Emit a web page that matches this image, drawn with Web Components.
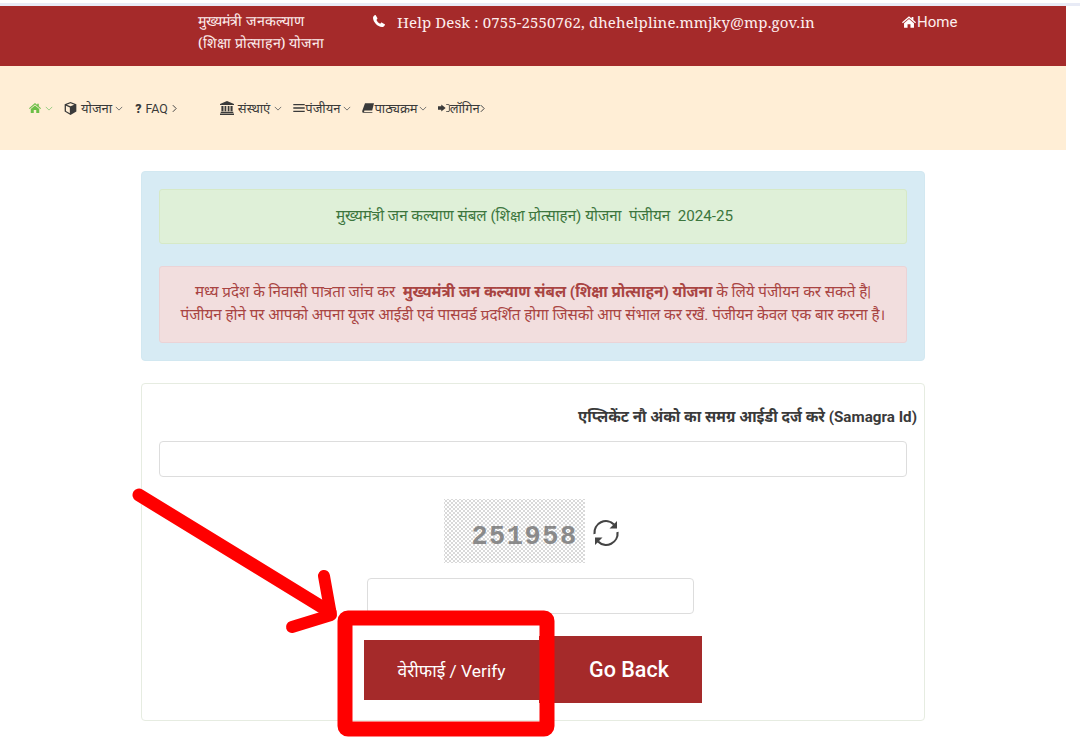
<!DOCTYPE html>
<html lang="hi">
<head>
<meta charset="utf-8">
<title>Registration</title>
<style>
  html, body { margin: 0; padding: 0; background: #fff; }
  body { font-family: Roboto, "Noto Sans", sans-serif; overflow: hidden; height: 743px; position: relative; }
</style>
</head>
<body>
<top-strip></top-strip>
<site-header></site-header>
<site-nav></site-nav>
<main-content>
  <info-panel>
    <status-alert kind="success">मुख्यमंत्री जन कल्याण संबल (शिक्षा प्रोत्साहन) योजना&nbsp; पंजीयन&nbsp; 2024-25</status-alert>
    <status-alert kind="danger">मध्य प्रदेश के निवासी पात्रता जांच कर&nbsp; <b>मुख्यमंत्री जन कल्याण संबल (शिक्षा प्रोत्साहन) योजना</b> के लिये पंजीयन कर सकते है|<br>पंजीयन होने पर आपको अपना यूजर आईडी एवं पासवर्ड प्रदर्शित होगा जिसको आप संभाल कर रखें. पंजीयन केवल एक बार करना है।</status-alert>
  </info-panel>
  <samagra-form></samagra-form>
</main-content>
<red-markup></red-markup>

<script>
const svgOpen = (box) => `<svg viewBox="${box}" width="100%" height="100%" style="display:block">`;
const icons = {
  home: `${svgOpen("0 0 24 20")}<path fill="currentColor" d="M12 0 L16.5 3.9 V1.5 H19.5 V6.5 L24 10.4 L22.6 12 L12 3 L1.4 12 L0 10.4 Z M12 5 L20.5 12.2 V20 H14.5 V14 H9.5 V20 H3.5 V12.2 Z"/></svg>`,
  cube: `${svgOpen("0 0 20 20")}<path fill="currentColor" fill-rule="evenodd" d="M10 0 L19 3.4 V14.8 L10 20 L1 14.8 V3.4 Z M10 2 L4.2 4.2 L10 6.6 L15.8 4.2 Z M9 8.3 V17.3 L3 13.8 V5.9 Z"/></svg>`,
  bank: `${svgOpen("0 0 20 20")}<path fill="currentColor" d="M10 0 L20 4.2 V5.8 H0 V4.2 Z M2 7 H5 V14.5 H2 Z M6.5 7 H9 V14.5 H6.5 Z M11 7 H13.5 V14.5 H11 Z M15 7 H18 V14.5 H15 Z M1 15.5 H19 V17 H1 Z M0 18 H20 V20 H0 Z"/></svg>`,
  bars: `${svgOpen("0 0 20 14")}<path fill="currentColor" d="M0 0 H20 V2.4 H0 Z M0 5.8 H20 V8.2 H0 Z M0 11.6 H20 V14 H0 Z"/></svg>`,
  book: `${svgOpen("0 0 20 16")}<path fill="currentColor" d="M5 0 H20 L17 12 H4.5 C3 12 3 14.5 4.5 14.5 H17.5 L17.1 16 H3 C0.5 16 0 14 0.6 12 Z"/></svg>`,
  signin: `${svgOpen("0 0 22 16")}<path fill="currentColor" d="M0 5 H6 V1.5 L14 8 L6 14.5 V11 H0 Z M15 0.5 H18 C20.4 0.5 21.5 2 21.5 4 V12 C21.5 14 20.4 15.5 18 15.5 H15 V14 H18 C19.2 14 20 13.2 20 12 V4 C20 2.8 19.2 2 18 2 H15 Z"/></svg>`,
  phone: `${svgOpen("0 0 16 16")}<path fill="currentColor" d="M3.6 0.3 L5.8 3.9 C6.1 4.4 6 5 5.6 5.4 L4.6 6.5 C5.4 8.4 7.3 10.6 9.5 11.6 L10.6 10.5 C11 10.1 11.6 10 12.1 10.3 L15.7 12.4 C16 12.6 16 13 15.9 13.3 C15.2 15 13.7 16 12 16 C6 15.6 0.4 9.6 0 4 C0 2.3 1.2 0.8 2.8 0.1 C3.1 0 3.4 0 3.6 0.3 Z"/></svg>`,
  chevDown: `${svgOpen("0 0 10 6")}<path fill="none" stroke="currentColor" stroke-width="1.1" d="M1 1 L5 5 L9 1"/></svg>`,
  chevRight: `${svgOpen("0 0 6 10")}<path fill="none" stroke="currentColor" stroke-width="1.2" d="M1 1 L5 5 L1 9"/></svg>`
};

class TopStrip extends HTMLElement {
  constructor() {
    super();
    this.attachShadow({ mode: "open" });
    this.shadowRoot.innerHTML = `
      <style>
        :host { display: flex; flex-direction: column; justify-content: flex-end; height: 6px; background: #fff; }
        div { height: 3px; background: #e8ebf6; }
      </style>
      <div></div>`;
  }
}

class SiteHeader extends HTMLElement {
  constructor() {
    super();
    this.attachShadow({ mode: "open" });
    this.shadowRoot.innerHTML = `
      <style>
        :host { display: flex; box-sizing: border-box; width: 1066px; height: 60px; background: #a52a2a; color: #fdeeee; align-items: flex-start; padding: 5px 0 0 198px; font-family: "Noto Serif", "Liberation Serif", serif; }
        .title { width: 175px; font-size: 14.2px; line-height: 22px; margin-top: -1px; white-space: nowrap; }
        .help { width: 529px; display: flex; align-items: center; font-size: 15px; line-height: 22px; letter-spacing: .12px; white-space: nowrap; }
        .ico { display: inline-block; width: 12px; height: 12px; margin-right: 12px; margin-top: -2px; color: #fff; }
        .home { display: flex; align-items: center; font: 15px/22px Roboto, sans-serif; }
        .home .ico { width: 14px; height: 12px; margin-right: 1px; margin-top: 0; }
      </style>
      <div class="title">मुख्यमंत्री जनकल्याण<br>(शिक्षा प्रोत्साहन) योजना</div>
      <div class="help"><span class="ico">${icons.phone}</span>Help Desk : 0755-2550762, dhehelpline.mmjky@mp.gov.in</div>
      <div class="home"><span class="ico">${icons.home}</span>Home</div>`;
  }
}

class SiteNav extends HTMLElement {
  constructor() {
    super();
    this.attachShadow({ mode: "open" });
    // left = gap before the item, iconGap = between icon and word, chevGap = between word and chevron
    const item = ({ icon, w, h, text, chev, left, iconGap, chevGap, color }) => `
      <span class="item" style="margin-left:${left}px">
        <span class="ico" style="width:${w}px;height:${h}px;margin-right:${iconGap}px;${color ? "color:" + color : ""}">${icons[icon]}</span>
        ${text}
        <span class="${chev === "r" ? "cr" : "cd"}" style="margin-left:${chevGap}px;${color ? "color:#8cc97a" : ""}">${chev === "r" ? icons.chevRight : icons.chevDown}</span>
      </span>`;
    this.shadowRoot.innerHTML = `
      <style>
        :host { display: flex; box-sizing: border-box; width: 1066px; height: 84px; background: #ffeed6; align-items: center; padding: 0 0 0 29px; color: #3a3a3a; font: 13px Roboto, "Noto Sans", sans-serif; }
        .item { display: inline-flex; align-items: center; white-space: nowrap; }
        .ico { display: inline-block; }
        .cd { display: inline-block; width: 8px; height: 5px; color: #666; }
        .cr { display: inline-block; width: 5px; height: 9px; color: #444; }
        .q { font-weight: 900; margin-right: 4px; }
        .faq { font-size: 12.4px; }
      </style>
      ${item({ icon: "home", w: 12, h: 10, text: "", chev: "d", left: 0, iconGap: 4, chevGap: 0, color: "#6cbf47" })}
      ${item({ icon: "cube", w: 13, h: 13, text: "योजना", chev: "d", left: 11, iconGap: 4, chevGap: 3 })}
      <span class="item faq" style="margin-left:12px"><span class="q">?</span>FAQ<span class="cr" style="margin-left:4px">${icons.chevRight}</span></span>
      ${item({ icon: "bank", w: 14, h: 14, text: "संस्थाएं", chev: "d", left: 43, iconGap: 4, chevGap: 4 })}
      ${item({ icon: "bars", w: 12, h: 8, text: "पंजीयन", chev: "d", left: 11, iconGap: 0, chevGap: 3 })}
      ${item({ icon: "book", w: 12, h: 10, text: "पाठ्यक्रम", chev: "d", left: 11, iconGap: 0, chevGap: 1 })}
      ${item({ icon: "signin", w: 12, h: 10, text: "लॉगिन", chev: "r", left: 11, iconGap: 0, chevGap: 0 })}`;
  }
}

class MainContent extends HTMLElement {
  constructor() {
    super();
    this.attachShadow({ mode: "open" });
    this.shadowRoot.innerHTML = `
      <style>
        :host { display: flex; flex-direction: column; gap: 22px; width: 784px; margin: 21px 0 0 141px; }
      </style>
      <slot></slot>`;
  }
}

class InfoPanel extends HTMLElement {
  constructor() {
    super();
    this.attachShadow({ mode: "open" });
    this.shadowRoot.innerHTML = `
      <style>
        :host { display: flex; flex-direction: column; gap: 22px; box-sizing: border-box; height: 190px; padding: 17px; background: #d7ebf4; border-radius: 4px; border: 1px solid #d2e8f1; }
      </style>
      <slot></slot>`;
  }
}

class StatusAlert extends HTMLElement {
  constructor() {
    super();
    this.attachShadow({ mode: "open" });
    const danger = this.getAttribute("kind") === "danger";
    this.shadowRoot.innerHTML = `
      <style>
        :host { display: flex; align-items: center; justify-content: center; box-sizing: border-box; text-align: center; white-space: nowrap; border-radius: 3px; font-size: 15.2px; line-height: 23px;
          height: ${danger ? 78 : 55}px;
          padding-left: ${danger ? 0 : 3}px;
          background: ${danger ? "#f2dede" : "#dff0d8"};
          border: 1px solid ${danger ? "#ebd3d6" : "#d6e9c6"};
          color: ${danger ? "#a94442" : "#3c763d"}; }
      </style>
      <div><slot></slot></div>`;
  }
}

class SamagraForm extends HTMLElement {
  constructor() {
    super();
    this.attachShadow({ mode: "open" });
    this.shadowRoot.innerHTML = `
      <style>
        :host { display: flex; flex-direction: column; box-sizing: border-box; height: 338px; padding: 22px 7px 0 17px; background: #fff; border: 1px solid #e6ece1; border-radius: 4px; color: #3a3a3a; }
        label { font-size: 15.2px; line-height: 22px; font-weight: 700; text-align: right; white-space: nowrap; }
        .field { box-sizing: border-box; display: block; height: 36px; border: 1.5px solid #ddd; border-radius: 4px; background: #fff; padding: 0 10px; outline: none; }
        .samagra { width: 748px; margin-top: 13px; }
        .cap-row { display: flex; align-items: center; margin: 22px 0 0 285px; height: 64px; }
        .cap { display: flex; align-items: center; justify-content: center; width: 141px; height: 64px; box-sizing: border-box; padding: 12px 0 0 20px; font: 700 27px "Liberation Mono", monospace; letter-spacing: 1.5px; color: #8a8a8a;
          background-color: #fff;
          background-image: radial-gradient(#c4c4c4 .6px, transparent .9px), radial-gradient(#c4c4c4 .6px, transparent .9px);
          background-size: 4px 4px; background-position: 0 0, 2px 2px; }
        .refresh { width: 30px; height: 30px; margin: 4px 0 0 6px; color: #444; }
        .answer { width: 327px; margin: 15px 0 0 208px; }
        .btns { display: flex; align-items: flex-start; margin: 22px 0 0 205px; }
        button { border: 0; background: #a52a2a; color: #fff; font-family: inherit; padding: 0; }
        .verify { width: 175px; height: 60px; margin-top: 4px; font-size: 17.4px; }
        .back { width: 163px; height: 67px; font-size: 21.5px; font-weight: 500; padding-left: 17px; }
      </style>
      <label>एप्लिकेंट नौ अंको का समग्र आईडी दर्ज करे (Samagra Id)</label>
      <input class="field samagra" type="text">
      <div class="cap-row">
        <div class="cap">251958</div>
        <div class="refresh">
          <svg viewBox="0 0 30 30" width="30" height="30" fill="none" stroke="currentColor" stroke-width="2.2" style="display:block">
            <path d="M3.5 16 A11.5 11.5 0 0 1 23 6.5"/>
            <path d="M26.5 14 A11.5 11.5 0 0 1 7 23.5"/>
            <path fill="currentColor" stroke="none" d="M26 3 V10.5 H18.5 Z M4 27 V19.5 H11.5 Z"/>
          </svg>
        </div>
      </div>
      <input class="field answer" type="text">
      <div class="btns">
        <button class="verify">वेरीफाई / Verify</button>
        <button class="back">Go Back</button>
      </div>`;
  }
}

// the red arrow and box drawn over the screenshot
class RedMarkup extends HTMLElement {
  constructor() {
    super();
    this.attachShadow({ mode: "open" });
    this.shadowRoot.innerHTML = `
      <style>
        :host { position: absolute; left: 0; top: 0; width: 1080px; height: 743px; pointer-events: none; }
      </style>
      <svg width="1080" height="743" fill="none" stroke="#ff0000" stroke-linecap="round" stroke-linejoin="round" style="display:block">
        <path stroke-width="13" d="M139 495 L330 612"/>
        <path stroke-width="12" d="M324 576 L331 615 L292 627"/>
        <rect x="345" y="618" width="202" height="111" rx="3" stroke-width="15"/>
      </svg>`;
  }
}

customElements.define("top-strip", TopStrip);
customElements.define("site-header", SiteHeader);
customElements.define("site-nav", SiteNav);
customElements.define("main-content", MainContent);
customElements.define("info-panel", InfoPanel);
customElements.define("status-alert", StatusAlert);
customElements.define("samagra-form", SamagraForm);
customElements.define("red-markup", RedMarkup);
</script>
</body>
</html>
